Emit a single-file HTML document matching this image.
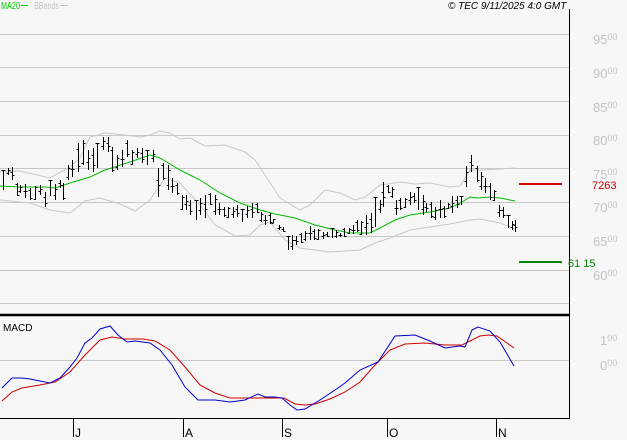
<!DOCTYPE html>
<html><head><meta charset="utf-8"><style>
html,body{margin:0;padding:0;background:#f7f7f7;width:627px;height:440px;overflow:hidden}
svg{display:block}
text{font-family:"Liberation Sans",sans-serif}
</style></head><body>
<svg id="s" width="627" height="440" xmlns="http://www.w3.org/2000/svg">
<rect width="627" height="440" fill="#f7f7f7"/>
<g stroke="#c8c8c8" stroke-width="1">
<line x1="0" y1="34.5" x2="569" y2="34.5"/><line x1="0" y1="67.5" x2="569" y2="67.5"/>
<line x1="0" y1="101.5" x2="569" y2="101.5"/><line x1="0" y1="135.5" x2="569" y2="135.5"/>
<line x1="0" y1="168.5" x2="569" y2="168.5"/><line x1="0" y1="202.5" x2="569" y2="202.5"/>
<line x1="0" y1="236.5" x2="569" y2="236.5"/><line x1="0" y1="270.5" x2="569" y2="270.5"/>
<line x1="0" y1="303.5" x2="569" y2="303.5"/><line x1="0" y1="360.5" x2="569" y2="360.5"/>
</g>
<g fill="#c4c4c4" font-size="13">
<text x="593" y="44">95<tspan font-size="9" dy="-4">00</tspan></text>
<text x="593" y="78">90<tspan font-size="9" dy="-4">00</tspan></text>
<text x="593" y="112">85<tspan font-size="9" dy="-4">00</tspan></text>
<text x="593" y="145">80<tspan font-size="9" dy="-4">00</tspan></text>
<text x="593" y="179">75<tspan font-size="9" dy="-4">00</tspan></text>
<text x="593" y="212">70<tspan font-size="9" dy="-4">00</tspan></text>
<text x="593" y="246">65<tspan font-size="9" dy="-4">00</tspan></text>
<text x="593" y="280">60<tspan font-size="9" dy="-4">00</tspan></text>
<text x="600" y="345">1<tspan font-size="9" dy="-4">00</tspan></text>
<text x="600" y="370">0<tspan font-size="9" dy="-4">00</tspan></text>
</g>
<line x1="0" y1="315" x2="569" y2="315" stroke="#000" stroke-width="2.5"/>
<line x1="569.5" y1="9" x2="569.5" y2="419" stroke="#000"/>
<line x1="0" y1="418.5" x2="570" y2="418.5" stroke="#000"/>
<g stroke="#000"><line x1="73.5" y1="419" x2="73.5" y2="437"/><line x1="183.5" y1="419" x2="183.5" y2="437"/><line x1="282.5" y1="419" x2="282.5" y2="437"/><line x1="387.5" y1="419" x2="387.5" y2="437"/><line x1="496.5" y1="419" x2="496.5" y2="437"/></g>
<g font-size="12" fill="#000"><text x="75" y="437">J</text><text x="185" y="437">A</text><text x="284" y="437">S</text><text x="389" y="437">O</text><text x="498" y="437">N</text></g>
<text x="1" y="9" font-size="10" fill="#00cc00" textLength="19" lengthAdjust="spacingAndGlyphs">MA20</text><line x1="21" y1="5.5" x2="28" y2="5.5" stroke="#00cc00"/>
<text x="34" y="9" font-size="10" fill="#c4c4c4" textLength="25" lengthAdjust="spacingAndGlyphs">BBands</text><line x1="60" y1="5.5" x2="68" y2="5.5" stroke="#c4c4c4"/>
<text x="448" y="9" font-size="10" font-style="italic" fill="#000">© TEC 9/11/2025 4:0 GMT</text>
<text x="3" y="331" font-size="10" fill="#000">MACD</text>
<g fill="none" stroke="#c8c8c8">
<polyline points="0,172 20,171 50,178 70,167 80,158 90,137 105,133 125,135 140,137 150,135 160,131 170,133 180,139 190,138 205,146 225,145 245,152 255,160 265,175 280,198 300,210 310,205 325,190 340,193 355,200 365,197 380,185 400,182 415,184 430,183 450,187 460,186 470,170 480,170 500,169 515,168"/>
<polyline points="0,200 30,203 50,210 70,213 85,201 100,198 120,204 135,211 150,200 165,178 180,183 200,205 215,225 235,236 250,235 260,225 270,222 285,240 300,248 330,252 360,250 375,243 390,238 410,230 430,227 450,224 470,220 480,219 500,223 515,229"/>
</g>
<polyline fill="none" stroke="#00bb00" points="0,186 20,187 45,187 55,188 70,183 90,177 105,170 130,162 150,155 160,158 180,170 200,180 220,193 240,203 260,210 275,214 295,218 315,225 335,230 350,233 370,233 380,228 395,220 410,215 430,212 450,208 462,202 470,197 477,198 490,197 500,198 515,201"/>
<path id="bars" fill="none" stroke="#000" stroke-width="1" d=""/>
<line x1="519" y1="184" x2="562" y2="184" stroke="#cc0000" stroke-width="2"/>
<text x="592" y="189" font-size="11" fill="#cc0000">7263</text>
<line x1="519" y1="262" x2="562" y2="262" stroke="#008800" stroke-width="2"/>
<text x="568" y="267" font-size="11" fill="#008800">61 15</text>
<polyline fill="none" stroke="#cc0000" points="2,401 12,392 22,388 40,385 55,382 70,372 85,355 100,340 112,337 125,339 143,339 155,341 170,350 185,367 200,385 215,393 230,398 250,398 270,398 284,398 295,404 305,405 315,404 330,399 345,392 360,382 375,365 390,350 405,344 425,343 445,345 462,345 480,336 488,335 497,336 507,343 514,348"/>
<polyline fill="none" stroke="#0000cc" points="2,388 12,378 22,378 30,379 40,381 50,383 60,378 70,367 77,358 85,343 92,338 100,329 110,326 118,335 127,342 135,341 150,343 160,350 172,365 185,387 198,400 205,400 215,400 230,402 245,400 258,394 265,397 275,397 282,398 290,405 297,410 305,409 320,400 335,390 345,383 360,370 378,362 395,336 415,335 430,341 445,348 460,346 465,347 472,330 478,327 490,331 500,342 514,366"/>
</svg>
<script>
var b=[[3,170,190],[8,168,175],[12,167,180],[17,183,196],[20,185,193],[25,184,198],[30,188,200],[35,186,200],[40,185,195],[45,192,207],[50,180,196],[55,184,200],[60,180,188],[63,183,200],[68,165,180],[72,160,177],[78,143,172],[83,140,165],[88,150,170],[93,148,172],[97,143,168],[103,137,150],[108,137,152],[112,147,172],[117,155,170],[122,150,167],[127,140,157],[132,150,165],[137,148,158],[142,148,163],[147,150,165],[153,150,162],[158,168,197],[163,163,180],[168,165,190],[172,178,193],[177,183,195],[182,195,210],[186,195,210],[190,200,215],[196,200,220],[200,198,215],[205,195,218],[210,193,205],[215,195,215],[219,203,215],[224,207,217],[228,207,218],[233,207,218],[237,205,217],[242,209,222],[247,206,218],[252,203,218],[257,203,213],[261,212,222],[265,215,225],[270,213,224],[273,219,223],[279,225,230],[283,227,232],[288,236,250],[292,235,250],[296,236,245],[301,233,243],[305,231,241],[310,226,240],[314,229,240],[318,229,240],[323,232,239],[327,232,237],[332,228,238],[336,230,238],[340,233,237],[344,228,237],[349,228,234],[353,225,234],[357,220,232],[361,221,235],[366,215,235],[371,213,233],[375,197,227],[380,200,213],[383,182,207],[388,185,193],[392,187,198],[396,200,215],[400,198,210],[405,198,208],[410,192,205],[414,193,203],[418,187,210],[423,195,215],[426,203,212],[431,202,218],[435,207,220],[440,200,218],[444,206,218],[448,203,209],[452,196,213],[457,196,208],[461,196,205],[466,166,187],[471,155,172],[477,166,182],[481,172,190],[485,178,193],[490,183,200],[494,190,201],[499,205,217],[503,207,218],[508,215,228],[512,221,230],[515,220,232]];
var d="";b.forEach(function(a,i){var x=a[0]+.5,h=a[2]-a[1],o=a[1]+h*((i*37%10)/10),c=a[1]+h*((i*53%10)/10);d+="M"+x+" "+a[1]+"V"+a[2]+"M"+(x-2)+" "+Math.round(o)+".5H"+x+"M"+x+" "+Math.round(c)+".5H"+(x+2);});
document.getElementById("bars").setAttribute("d",d);
</script>
</body></html>
